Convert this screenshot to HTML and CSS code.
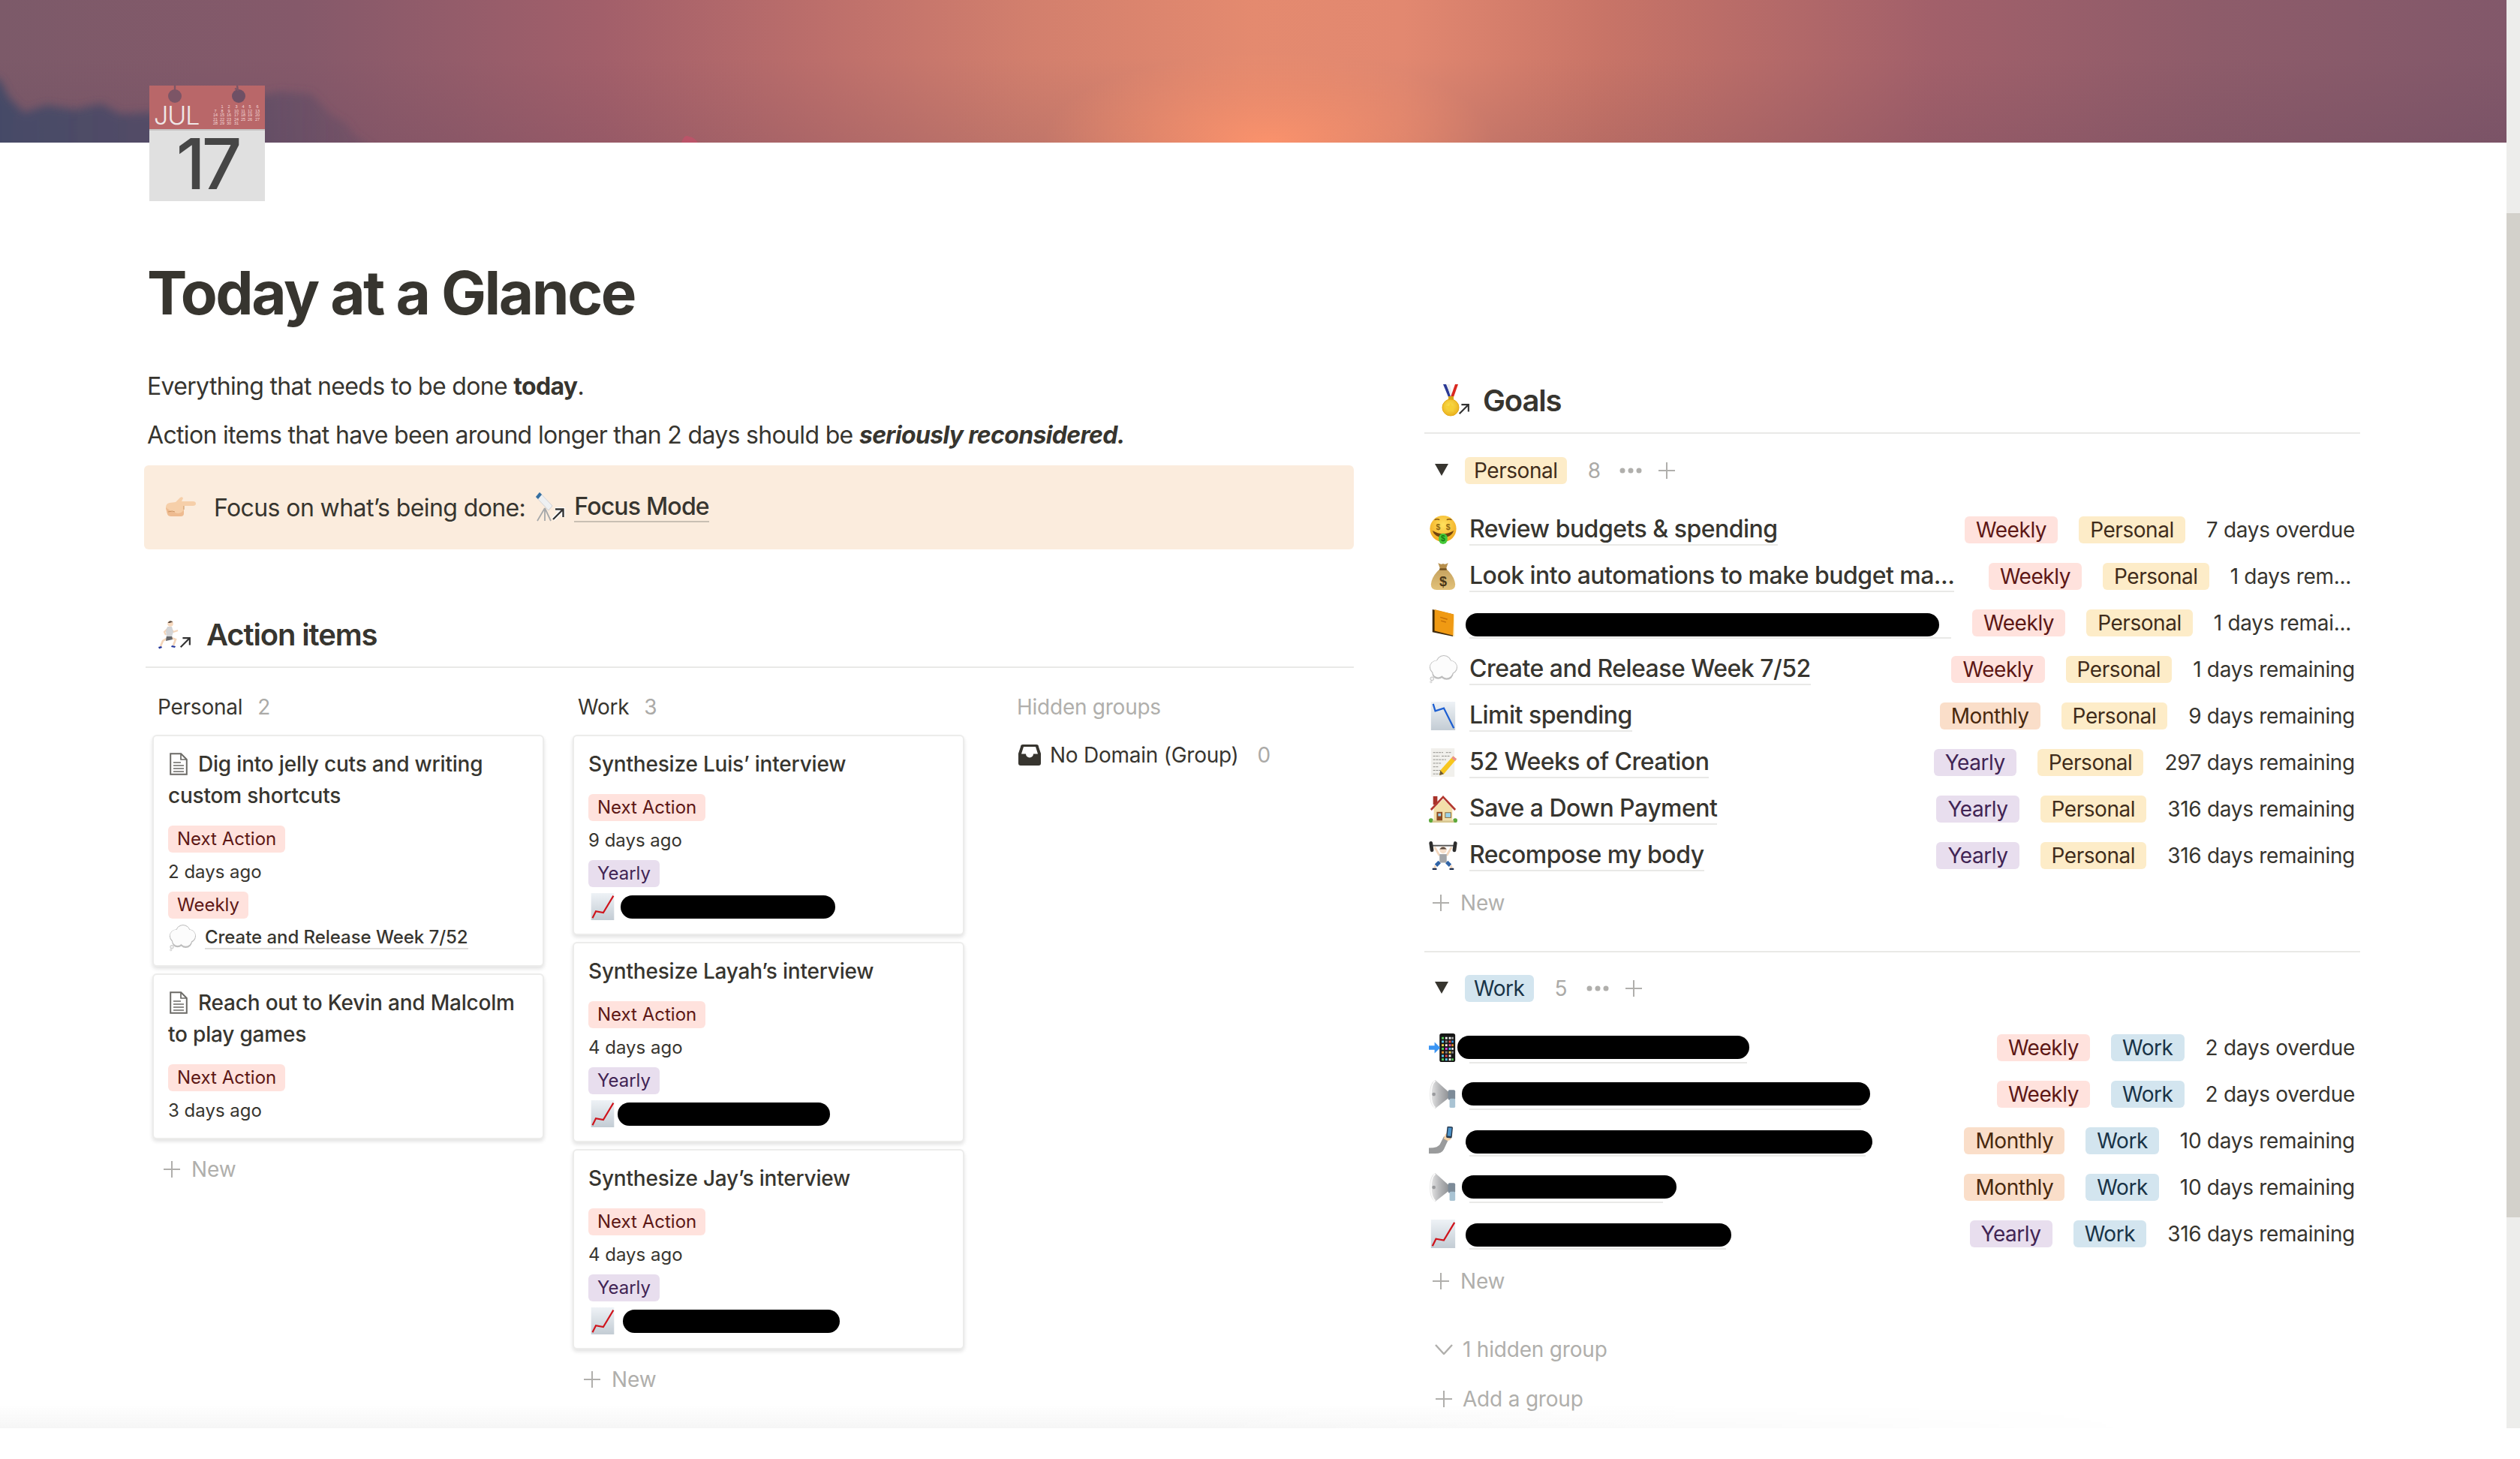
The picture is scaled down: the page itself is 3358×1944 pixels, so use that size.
FILE: index.html
```html
<!DOCTYPE html>
<html lang="en">
<head>
<meta charset="utf-8">
<title>Today at a Glance</title>
<link rel="stylesheet" href="styles.css">
</head>
<body>
<svg class="defs" width="0" height="0" aria-hidden="true">
  <defs>
    <linearGradient id="gChart" x1="0" y1="0" x2="0" y2="1"><stop offset="0" stop-color="#eef2f6"/><stop offset="1" stop-color="#c3ccd4"/></linearGradient>
    <radialGradient id="gFace" cx=".5" cy=".35" r=".7"><stop offset="0" stop-color="#ffe25e"/><stop offset="1" stop-color="#f0a41a"/></radialGradient>
    <radialGradient id="gGold" cx=".45" cy=".4" r=".7"><stop offset="0" stop-color="#fbe150"/><stop offset="1" stop-color="#e8ac16"/></radialGradient>
    <linearGradient id="gBag" x1="0" y1="0" x2="0" y2="1"><stop offset="0" stop-color="#c6a25f"/><stop offset="1" stop-color="#e2c27a"/></linearGradient>
    <linearGradient id="gHorn" x1="0" y1="0" x2="1" y2="0"><stop offset="0" stop-color="#ececec"/><stop offset=".5" stop-color="#b8b9bb"/><stop offset="1" stop-color="#909295"/></linearGradient>
    <linearGradient id="gCloud" x1="0" y1="0" x2="1" y2="0"><stop offset="0" stop-color="#454a67"/><stop offset=".45" stop-color="#4f4a66" stop-opacity=".9"/><stop offset="1" stop-color="#5f4b64" stop-opacity=".35"/></linearGradient>
    <filter id="fSoft" x="-5%" y="-10%" width="110%" height="120%"><feGaussianBlur stdDeviation="6"/></filter>

    <symbol id="i-arrow" viewBox="0 0 20 20"><path d="M3 17 16 4M6 3.5h10.5V14" fill="none" stroke="#fff" stroke-width="5"/><path d="M3 17 16 4M6 3.5h10.5V14" fill="none" stroke="#333" stroke-width="2.4"/></symbol>

    <symbol id="i-doc" viewBox="0 0 24 30"><path d="M1.2 1.2h14l7.6 7.8v19.8H1.2z" fill="#fff" stroke="#6b6a66" stroke-width="2"/><path d="M15 1.5V9h7.5M5 13h10M5 17h14M5 21h14M5 25h14" fill="none" stroke="#6b6a66" stroke-width="1.7"/></symbol>

    <symbol id="i-thought" viewBox="0 0 40 40"><g fill="#bdbdbd"><circle cx="11" cy="17" r="10"/><circle cx="21" cy="11" r="11"/><circle cx="30" cy="17" r="10"/><circle cx="25" cy="25" r="9.500"/><circle cx="13" cy="25" r="8.500"/></g><g fill="#fcfcfc"><circle cx="11" cy="16.500" r="9"/><circle cx="21" cy="11" r="10"/><circle cx="30" cy="16.500" r="9"/><circle cx="25" cy="23.500" r="8.500"/><circle cx="13" cy="23.500" r="7.500"/></g><circle cx="4.500" cy="33" r="2.500" fill="#f1f1f1" stroke="#bdbdbd"/><circle cx="3" cy="37.500" r="1.300" fill="#eee" stroke="#bdbdbd" stroke-width=".6"/></symbol>

    <symbol id="i-up" viewBox="0 0 40 40"><rect x="3" y="0" width="34" height="40" fill="url(#gChart)"/><path d="M5 37 10 27 21 29 36 4" fill="none" stroke="#cf141c" stroke-width="2.400"/></symbol>
    <symbol id="i-down" viewBox="0 0 40 40"><rect x="3" y="0" width="34" height="40" fill="url(#gChart)"/><path d="M6 3 9 13 21 9 35 37" fill="none" stroke="#1d5fd2" stroke-width="2.400"/></symbol>

    <symbol id="i-inbox" viewBox="0 0 30 28"><path d="M6 0h18a3 3 0 0 1 3 3l3 9v13a3 3 0 0 1-3 3H3a3 3 0 0 1-3-3V12l3-9a3 3 0 0 1 3-3z" fill="#37352f"/><path d="M7 3h16l3 9.500h-6a5 5 0 0 1-10 0H4z" fill="#fff"/></symbol>

    <symbol id="i-money" viewBox="0 0 40 40"><circle cx="20" cy="18.500" r="18.500" fill="url(#gFace)"/><path d="M8 6q4-2 7 0M25 6q4-2 7 0" fill="none" stroke="#8a5a10" stroke-width="1.400"/><text x="13" y="20" class="em-glyph" fill="#8c6412">$</text><text x="27" y="20" class="em-glyph" fill="#8c6412">$</text><path d="M5 21q15 9 30 0q-3 9-15 10q-12-1-15-10z" fill="#70420f"/><rect x="14" y="25" width="12" height="15" rx="6" fill="#47c93a"/><text x="20" y="36" class="em-glyph" fill="#157a12">$</text></symbol>

    <symbol id="i-bag" viewBox="0 0 40 40"><path d="M13 1q4 3 7 1q3 2 7-1l-3 9h-8z" fill="#b78f4c"/><path d="M15 10h10q11 10 12 21q0 8-8 8H11q-8 0-8-8q1-11 12-21z" fill="url(#gBag)"/><path d="M15 10h10" stroke="#6f4e1d" stroke-width="2.500"/><text x="20" y="34" class="em-bag" fill="#4a3718">$</text></symbol>

    <symbol id="i-book" viewBox="0 0 40 40"><path d="M5 1 34 8V39L5 33z" fill="#3f2a0c"/><path d="M8 1 35 8V38L8 31z" fill="#f09a13"/><path d="M35 8 36 9V39L34 39z" fill="#fff0c8"/><path d="M16 12 26 15M17 17 24 19" stroke="#c46f08" stroke-width="1.500"/></symbol>

    <symbol id="i-memo" viewBox="0 0 40 40"><rect x="3" y="0" width="33" height="40" fill="#f1f0ec"/><path d="M6 6h14M24 6h7M6 11h9M18 11h11M6 16h18M6 21h11M6 26h8M6 31h11M6 36h10" stroke="#8c8b86" stroke-width="1" stroke-dasharray="3 1"/><path d="M34 11 39 15 21 36 15 38 16 31z" fill="#f7c61e"/><path d="M34 11 39 15 37 18 32 14z" fill="#ea8f92"/><path d="M16 31 21 36 15 38z" fill="#6d5a38"/></symbol>

    <symbol id="i-house" viewBox="0 0 40 40"><rect x="6" y="2" width="6" height="12" fill="#a8322a"/><path d="M7 19 20 6l13 13v17H7z" fill="#f3dfa9"/><path d="M2 20 20 1l18 19-2 2L20 5 4 22z" fill="#b3392f"/><rect x="11" y="24" width="8" height="13" fill="#8d4a22"/><rect x="13" y="26" width="4" height="4" fill="#9bd2ea"/><rect x="23" y="25" width="8" height="7" fill="#9bd2ea" stroke="#8d6a35"/><circle cx="3" cy="36" r="3" fill="#5da83b"/><circle cx="37" cy="36" r="3" fill="#5da83b"/><rect x="5" y="36" width="30" height="3" fill="#d8c78f"/></symbol>

    <symbol id="i-lift" viewBox="0 0 40 40"><path d="M4 6 36 6" stroke="#555" stroke-width="2"/><rect x="1" y="0" width="5" height="15" rx="2.500" fill="#2d2d2d" transform="rotate(-8 3 7)"/><rect x="34" y="0" width="5" height="15" rx="2.500" fill="#2d2d2d" transform="rotate(8 36 7)"/><path d="M8 8 15 20M32 8 25 20" stroke="#f3d7bd" stroke-width="3"/><circle cx="20" cy="12" r="5" fill="#f6dfca"/><path d="M15 11q5-6 10 0" fill="#5b4a3e"/><rect x="15" y="18" width="10" height="12" fill="#a3a5a8"/><path d="M15 29 10 34M25 29 30 34" stroke="#2f63a6" stroke-width="5"/><path d="M9 34 8 39M31 34 32 39" stroke="#f3d7bd" stroke-width="3"/><path d="M5 39h6M29 39h6" stroke="#1c2c4c" stroke-width="2.500"/></symbol>

    <symbol id="i-phone" viewBox="0 0 40 40"><rect x="15" y="0" width="22" height="40" rx="3" fill="#161616"/><g fill="#5fd0f5"><rect x="18" y="5" width="3" height="3" fill="#57d45a"/><rect x="23" y="5" width="3" height="3" fill="#f2f2f2"/><rect x="28" y="5" width="3" height="3" fill="#f2f2f2"/><rect x="32" y="5" width="2.500" height="3" fill="#b2b2b2"/><rect x="18" y="10" width="3" height="3"/><rect x="23" y="10" width="3" height="3" fill="#888"/><rect x="28" y="10" width="3" height="3" fill="#e74f4f"/><rect x="32" y="10" width="2.500" height="3" fill="#2d9af0"/><rect x="18" y="15" width="3" height="3" fill="#f7d64a"/><rect x="23" y="15" width="3" height="3" fill="#f2f2f2"/><rect x="28" y="15" width="3" height="3" fill="#e8579f"/><rect x="32" y="15" width="2.500" height="3" fill="#f29a2e"/><rect x="18" y="20" width="3" height="3" fill="#57d45a"/><rect x="23" y="20" width="3" height="3" fill="#e53be0"/><rect x="28" y="20" width="3" height="3"/><rect x="32" y="20" width="2.500" height="3" fill="#f2f2f2"/><rect x="18" y="25" width="3" height="3" fill="#f29a2e"/><rect x="23" y="25" width="3" height="3" fill="#888"/><rect x="28" y="25" width="3" height="3" fill="#f7d64a"/><rect x="32" y="25" width="2.500" height="3" fill="#888"/><rect x="18" y="30" width="3" height="3"/><rect x="23" y="30" width="3" height="3" fill="#e74f4f"/><rect x="28" y="30" width="3" height="3" fill="#f2f2f2"/><rect x="18" y="35" width="3" height="3" fill="#57d45a"/><rect x="23" y="35" width="3" height="3"/><rect x="28" y="35" width="3" height="3" fill="#f2f2f2"/><rect x="32" y="35" width="2.500" height="3" fill="#57d45a"/></g><path d="M0 17h8v-5l8 8-8 8v-5H0z" fill="#3a95f4"/></symbol>

    <symbol id="i-horn" viewBox="0 0 40 40"><path d="M28 17 9 0Q1 4 1 20t8 20L28 25z" fill="url(#gHorn)"/><path d="M9 1q-6 5-6 19t6 19" fill="none" stroke="#fafafa" stroke-width="2"/><circle cx="7" cy="20" r="2.500" fill="#9a9b9e"/><rect x="27" y="14" width="10" height="14" rx="2" fill="#7d8b98"/><rect x="29" y="26" width="8" height="13" rx="2" fill="#a9c3d3"/></symbol>

    <symbol id="i-selfie" viewBox="0 0 40 40"><path d="M0 30q14 0 16-6l5-10 7 3-7 15q-3 6-12 6H0z" fill="#9a9b9c"/><path d="M21 17l2-6 7-6 3 7-3 7-4 1z" fill="#f8d3a8"/><rect x="25" y="0" width="8" height="16" rx="1.500" fill="#27384c" transform="rotate(6 29 8)"/><rect x="26.500" y="1.500" width="5" height="12" fill="#4c93c9" transform="rotate(6 29 8)"/></symbol>

    <symbol id="i-hand" viewBox="0 0 42 28"><path d="M1 14q0-5 5-6l8-1 6-6q3-2 4 1l-2 4h15q4 0 4 3t-4 3H25v9q0 4-4 4H8q-4 0-5-3z" fill="#f6cfa9"/><path d="M1 14q0 2 1 5l1 4q1 3 5 3h13q4 0 4-4v-5q-4 7-12 4T1 14z" fill="#eebb90"/><path d="M25 12v5M4 20q6-2 9 0" stroke="#c9925f" stroke-width="1" fill="none"/></symbol>

    <symbol id="i-scope" viewBox="0 0 45 41"><path d="M5 8 10 2 27 20 22 26z" fill="#eef0f2" stroke="#c9ccd0" stroke-width=".8"/><path d="M5 8 10 2 13 5 8 11z" fill="#356f9f"/><path d="M7 40 17 23M17 24 17 40M17 23 25 40" stroke="#a6a8aa" stroke-width="1.800"/><g transform="translate(25 21)"><use href="#i-arrow" width="20" height="20"/></g></symbol>

    <symbol id="i-run" viewBox="0 0 45 38"><path d="M14 22 6 27 3 34M15 22 23 25 20 33" fill="none" stroke="#f3d5ba" stroke-width="2.600"/><path d="M11 20h7l1 5-9 2z" fill="#66676a"/><path d="M15 8 20 15 26 13M14 9 8 15 10 19" fill="none" stroke="#f3d5ba" stroke-width="2.200"/><path d="M12 8h6l2 7-2 6h-7l-1-7z" fill="#d3d4d6"/><circle cx="16" cy="4" r="3.800" fill="#f6d9bf"/><path d="M12.500 3q3-5 7-1-3 0-4 1z" fill="#5b4a3e"/><path d="M0 35l4-1 1 2-4 1.500zM18 33l5 1-1 2-5-1z" fill="#24379c"/><g transform="translate(27 20)"><use href="#i-arrow" width="18" height="18"/></g></symbol>

    <symbol id="i-medal" viewBox="0 0 40 43"><path d="M2 0h4l7 17h-4z" fill="#2b3a95"/><path d="M7 0h4l3 13-2 4z" fill="#eee"/><path d="M22 0h-4L12 17h4z" fill="#d9281f"/><rect x="9" y="16" width="7" height="5" fill="#d5a51a"/><circle cx="12" cy="31" r="11" fill="url(#gGold)" stroke="#e5a913"/><path d="M12 24.500l2 4.200 4.600.6-3.300 3.200.8 4.600-4.100-2.200-4.100 2.200.8-4.600-3.300-3.200 4.600-.6z" fill="#f6cf34"/><g transform="translate(21 24)"><use href="#i-arrow" width="18" height="18"/></g></symbol>

    <symbol id="i-plus" viewBox="0 0 24 24"><path d="M12 1v22M1 12h22" fill="none" stroke="currentColor" stroke-width="2"/></symbol>
    <symbol id="i-tri" viewBox="0 0 18 16"><path d="M0 0h18L9 16z" fill="#37352f"/></symbol>
    <symbol id="i-dots" viewBox="0 0 30 8"><circle cx="4" cy="4" r="3.500" fill="currentColor"/><circle cx="15" cy="4" r="3.500" fill="currentColor"/><circle cx="26" cy="4" r="3.500" fill="currentColor"/></symbol>
    <symbol id="i-chev" viewBox="0 0 24 14"><path d="M1 1 12 13 23 1" fill="none" stroke="currentColor" stroke-width="2.400"/></symbol>
  </defs>
</svg>

<div class="window">
  <div class="page">
    <div class="cover">
      <svg class="cover-art" viewBox="0 0 3340 190" aria-hidden="true">
        <path d="M-20 100 0 106 12 130 32 150 62 140 100 146 135 138 160 152 230 148 300 145 345 128 372 122 415 125 440 152 462 165 470 178 500 200 -20 210z" fill="url(#gCloud)" filter="url(#fSoft)"/>
        <path d="M908 190q4-12 10-8 6 0 12 8z" fill="#c4506a" opacity=".75"/>
      </svg>
    </div>

    <div class="page-inner">
      <div class="page-icon">
        <svg class="cal-art" viewBox="0 0 154 154" aria-hidden="true">
          <rect width="154" height="60" fill="#b96769"/>
          <rect y="58" width="154" height="96" fill="#e0e0e0"/>
          <rect y="58" width="154" height="2" fill="#c7c3c3"/>
          <circle cx="34" cy="14" r="9" fill="#7c5566"/>
          <circle cx="119" cy="14" r="9" fill="#6f5065"/>
          <path d="M34 0v6M117 0l1 7M114 4l5 2" stroke="#7c5566" stroke-width="2.400"/>
          <g class="cal-days">
            <text x="97" y="30">1</text><text x="106" y="30">2</text><text x="116" y="30">3</text><text x="125" y="30">4</text><text x="134" y="30">5</text><text x="144" y="30">6</text>
            <text x="88" y="35.500">7</text><text x="97" y="35.500">8</text><text x="106" y="35.500">9</text><text x="116" y="35.500">10</text><text x="125" y="35.500">11</text><text x="134" y="35.500">12</text><text x="144" y="35.500">13</text>
            <text x="88" y="41">14</text><text x="97" y="41">15</text><text x="106" y="41">16</text><text x="116" y="41">17</text><text x="125" y="41">18</text><text x="134" y="41">19</text><text x="144" y="41">20</text>
            <text x="88" y="46.500">21</text><text x="97" y="46.500">22</text><text x="106" y="46.500">23</text><text x="116" y="46.500">24</text><text x="125" y="46.500">25</text><text x="134" y="46.500">26</text><text x="144" y="46.500">27</text>
            <text x="88" y="52">28</text><text x="97" y="52">29</text><text x="106" y="52">30</text><text x="116" y="52">31</text>
          </g>
        </svg>
        <span class="cal-month">JUL</span>
        <span class="cal-date">17</span>
      </div>

      <h1 class="title">Today at a Glance</h1>

      <div class="columns">
        <section class="col-left">
          <p class="para">Everything that needs to be done <b>today</b>.</p>
          <p class="para para-second">Action items that have been around longer than 2 days should be <b><i>seriously reconsidered.</i></b></p>

          <div class="callout">
            <svg class="ic-hand"><use href="#i-hand"/></svg>
            <span class="callout-text">Focus on what’s being done:</span>
            <svg class="ic-scope"><use href="#i-scope"/></svg>
            <span class="link">Focus Mode</span>
          </div>

          <h3 class="heading heading-action">
            <svg class="ic-run"><use href="#i-run"/></svg>
            <span>Action items</span>
          </h3>

          <div class="board">
            <div class="board-col">
              <div class="board-head"><span>Personal</span><span class="count">2</span></div>
              <article class="card">
                <div class="card-title"><svg class="ic-doc"><use href="#i-doc"/></svg>Dig into jelly cuts and writing custom shortcuts</div>
                <div class="card-props">
                  <span class="tag tag-sm red">Next Action</span>
                  <span class="card-date">2 days ago</span>
                  <span class="tag tag-sm red">Weekly</span>
                  <span class="relation"><svg class="ic-rel"><use href="#i-thought"/></svg><span class="rel-link">Create and Release Week 7/52</span></span>
                </div>
              </article>
              <article class="card">
                <div class="card-title"><svg class="ic-doc"><use href="#i-doc"/></svg>Reach out to Kevin and Malcolm to play games</div>
                <div class="card-props">
                  <span class="tag tag-sm red">Next Action</span>
                  <span class="card-date">3 days ago</span>
                </div>
              </article>
              <div class="board-new"><svg class="ic-plus"><use href="#i-plus"/></svg>New</div>
            </div>

            <div class="board-col">
              <div class="board-head"><span>Work</span><span class="count">3</span></div>
              <article class="card">
                <div class="card-title">Synthesize Luis’ interview</div>
                <div class="card-props">
                  <span class="tag tag-sm red">Next Action</span>
                  <span class="card-date">9 days ago</span>
                  <span class="tag tag-sm purple">Yearly</span>
                  <span class="relation"><svg class="ic-rel"><use href="#i-up"/></svg><span class="pill pill-a"></span></span>
                </div>
              </article>
              <article class="card">
                <div class="card-title">Synthesize Layah’s interview</div>
                <div class="card-props">
                  <span class="tag tag-sm red">Next Action</span>
                  <span class="card-date">4 days ago</span>
                  <span class="tag tag-sm purple">Yearly</span>
                  <span class="relation"><svg class="ic-rel"><use href="#i-up"/></svg><span class="pill pill-b"></span></span>
                </div>
              </article>
              <article class="card">
                <div class="card-title">Synthesize Jay’s interview</div>
                <div class="card-props">
                  <span class="tag tag-sm red">Next Action</span>
                  <span class="card-date">4 days ago</span>
                  <span class="tag tag-sm purple">Yearly</span>
                  <span class="relation"><svg class="ic-rel"><use href="#i-up"/></svg><span class="pill pill-c"></span></span>
                </div>
              </article>
              <div class="board-new"><svg class="ic-plus"><use href="#i-plus"/></svg>New</div>
            </div>

            <div class="board-hidden">
              <div class="board-head muted">Hidden groups</div>
              <div class="hidden-row"><svg class="ic-inbox"><use href="#i-inbox"/></svg><span>No Domain (Group)</span><span class="count">0</span></div>
            </div>
          </div>
        </section>

        <section class="col-right">
          <h3 class="heading heading-goals">
            <svg class="ic-medal"><use href="#i-medal"/></svg>
            <span>Goals</span>
          </h3>

          <div class="group-head">
            <svg class="ic-tri"><use href="#i-tri"/></svg>
            <span class="tag tag-head yellow">Personal</span>
            <span class="count">8</span>
            <svg class="ic-dots"><use href="#i-dots"/></svg>
            <svg class="ic-plus-head"><use href="#i-plus"/></svg>
          </div>

          <div class="goal"><svg class="ic-goal"><use href="#i-money"/></svg><span class="goal-title">Review budgets &amp; spending</span><span class="props"><span class="tag red">Weekly</span><span class="tag yellow">Personal</span><span class="goal-date">7 days overdue</span></span></div>
          <div class="goal"><svg class="ic-goal"><use href="#i-bag"/></svg><span class="goal-title">Look into automations to make budget ma...</span><span class="props"><span class="tag red">Weekly</span><span class="tag yellow">Personal</span><span class="goal-date trunc">1 days rem...</span></span></div>
          <div class="goal"><svg class="ic-goal"><use href="#i-book"/></svg><span class="goal-title blank b-p3"><span class="pill pill-p3"></span></span><span class="props"><span class="tag red">Weekly</span><span class="tag yellow">Personal</span><span class="goal-date trunc">1 days remai...</span></span></div>
          <div class="goal"><svg class="ic-goal"><use href="#i-thought"/></svg><span class="goal-title">Create and Release Week 7/52</span><span class="props"><span class="tag red">Weekly</span><span class="tag yellow">Personal</span><span class="goal-date">1 days remaining</span></span></div>
          <div class="goal"><svg class="ic-goal"><use href="#i-down"/></svg><span class="goal-title">Limit spending</span><span class="props"><span class="tag orange">Monthly</span><span class="tag yellow">Personal</span><span class="goal-date">9 days remaining</span></span></div>
          <div class="goal"><svg class="ic-goal"><use href="#i-memo"/></svg><span class="goal-title">52 Weeks of Creation</span><span class="props"><span class="tag purple">Yearly</span><span class="tag yellow">Personal</span><span class="goal-date">297 days remaining</span></span></div>
          <div class="goal"><svg class="ic-goal"><use href="#i-house"/></svg><span class="goal-title">Save a Down Payment</span><span class="props"><span class="tag purple">Yearly</span><span class="tag yellow">Personal</span><span class="goal-date">316 days remaining</span></span></div>
          <div class="goal"><svg class="ic-goal"><use href="#i-lift"/></svg><span class="goal-title">Recompose my body</span><span class="props"><span class="tag purple">Yearly</span><span class="tag yellow">Personal</span><span class="goal-date">316 days remaining</span></span></div>
          <div class="list-new"><svg class="ic-plus"><use href="#i-plus"/></svg>New</div>

          <div class="group-sep"></div>

          <div class="group-head group-head-work">
            <svg class="ic-tri"><use href="#i-tri"/></svg>
            <span class="tag tag-head blue">Work</span>
            <span class="count">5</span>
            <svg class="ic-dots"><use href="#i-dots"/></svg>
            <svg class="ic-plus-head"><use href="#i-plus"/></svg>
          </div>

          <div class="goal"><svg class="ic-goal"><use href="#i-phone"/></svg><span class="goal-title blank b-w1"><span class="pill pill-w1"></span></span><span class="props"><span class="tag red">Weekly</span><span class="tag blue">Work</span><span class="goal-date">2 days overdue</span></span></div>
          <div class="goal"><svg class="ic-goal"><use href="#i-horn"/></svg><span class="goal-title blank b-w2"><span class="pill pill-w2"></span></span><span class="props"><span class="tag red">Weekly</span><span class="tag blue">Work</span><span class="goal-date">2 days overdue</span></span></div>
          <div class="goal"><svg class="ic-goal"><use href="#i-selfie"/></svg><span class="goal-title blank b-w3"><span class="pill pill-w3"></span></span><span class="props"><span class="tag orange">Monthly</span><span class="tag blue">Work</span><span class="goal-date">10 days remaining</span></span></div>
          <div class="goal"><svg class="ic-goal"><use href="#i-horn"/></svg><span class="goal-title blank b-w4"><span class="pill pill-w4"></span></span><span class="props"><span class="tag orange">Monthly</span><span class="tag blue">Work</span><span class="goal-date">10 days remaining</span></span></div>
          <div class="goal"><svg class="ic-goal"><use href="#i-up"/></svg><span class="goal-title blank b-w5"><span class="pill pill-w5"></span></span><span class="props"><span class="tag purple">Yearly</span><span class="tag blue">Work</span><span class="goal-date">316 days remaining</span></span></div>
          <div class="list-new"><svg class="ic-plus"><use href="#i-plus"/></svg>New</div>

          <div class="list-foot list-foot-hidden"><svg class="ic-chev"><use href="#i-chev"/></svg>1 hidden group</div>
          <div class="list-foot list-foot-add"><svg class="ic-plus"><use href="#i-plus"/></svg>Add a group</div>
        </section>
      </div>
    </div>
    <div class="bottom-fade"></div>
  </div>
  <div class="scrollbar"><div class="scroll-thumb"></div></div>
</div>
</body>
</html>
```

FILE: styles.css
```css
* { box-sizing: border-box; }

html, body {
  margin: 0;
  height: 1944px;
  overflow: hidden;
  background: #fff;
}

body {
  font-family: Inter, "Liberation Sans", sans-serif;
  color: #37352f;
  font-size: 32px;
}

.defs { position: absolute; }

.window { display: flex; height: 1903px; }

.page {
  position: relative;
  flex: 1;
  min-width: 0;
  overflow: hidden;
  background: #fff;
}

.scrollbar { width: 18px; background: #ededeb; padding-top: 284px; }
.scroll-thumb { height: 1338px; background: #d3d1cb; }

.cover {
  height: 190px;
  overflow: hidden;
  background:
    radial-gradient(ellipse 300px 120px at 50.6% 100%, rgba(255, 148, 108, .9), rgba(255, 148, 108, 0)),
    linear-gradient(to bottom, rgba(90, 60, 90, 0) 40%, rgba(70, 50, 80, .12) 100%),
    linear-gradient(to right, #7c5a69 0, #85596a 12%, #a25f6a 24%, #bd6f6b 33%, #d27f6d 41%, #e48a6f 50%, #e28870 56%, #c87467 64%, #a2606a 77%, #8e5c6a 88%, #82586a 100%);
}

.cover-art { display: block; width: 3340px; height: 190px; }

.page-inner { padding: 0 0 0 196px; }

.page-icon {
  position: relative;
  width: 154px;
  height: 154px;
  margin: -76px 0 0 3px;
}

.cal-art { display: block; width: 154px; height: 154px; }

.cal-month {
  position: absolute;
  left: 6px;
  top: 26px;
  font-size: 34px;
  font-weight: 300;
  line-height: 28px;
  letter-spacing: -1px;
  color: #efe7e7;
}

.cal-date {
  position: absolute;
  left: 0;
  right: 0;
  top: 70px;
  font-size: 94px;
  font-weight: 500;
  line-height: 68px;
  text-align: center;
  letter-spacing: -5px;
  color: #464646;
}

.cal-days text { font: 400 5.500px "Liberation Sans", sans-serif; fill: #f3dada; text-anchor: middle; }
.em-glyph { font: 700 11px "Liberation Sans", sans-serif; text-anchor: middle; }
.em-bag { font: 700 19px "Liberation Sans", sans-serif; text-anchor: middle; }

.title {
  margin: 74px 0 0;
  font-size: 80px;
  line-height: 96px;
  font-weight: 700;
  letter-spacing: -2.450px;
  color: #37352f;
}

.columns { display: flex; margin-top: 53px; }

.col-left { width: 1608px; flex: none; }
.col-right { width: 1247px; flex: none; margin-left: 94px; }

.para {
  margin: 0;
  font-size: 32px;
  line-height: 48px;
  letter-spacing: -.67px;
}
.para-second { margin-top: 17px; }

.callout {
  display: flex;
  align-items: center;
  height: 112px;
  margin: 16px 0 0 -4px;
  padding-left: 28px;
  background: #fbecdd;
  border-radius: 6px;
  letter-spacing: -.6px;
}

.ic-hand { width: 42px; height: 28px; flex: none; }
.callout-text { margin-left: 23px; }
.ic-scope { width: 45px; height: 41px; flex: none; margin: -4px 11px 0 9px; }
.link { border-bottom: 2px solid #c9bfb3; line-height: 38px; font-weight: 500; letter-spacing: -.8px; }

.heading {
  display: flex;
  align-items: center;
  margin: 0;
  font-size: 40px;
  line-height: 52px;
  font-weight: 600;
  letter-spacing: -1.150px;
  border-bottom: 2px solid #e9e9e7;
}

.heading-action { margin: 88px 0 0 -2px; height: 70px; padding: 0 0 16px 17px; }
.ic-run { width: 45px; height: 38px; flex: none; margin-right: 19px; }

.heading-goals { height: 87px; padding: 0 0 0 23px; margin: 0; }
.ic-medal { width: 40px; height: 43px; flex: none; margin-right: 15px; }

.board { display: flex; margin: 34px 0 0 7px; }
.board-col { width: 522px; flex: none; margin-right: 38px; }
.board-hidden { margin-left: 32px; }

.board-head {
  display: flex;
  height: 36px;
  align-items: center;
  padding-left: 7px;
  font-size: 28px;
  letter-spacing: -.25px;
  gap: 20px;
  margin-bottom: 19px;
}
.muted { color: #b0afac; padding-left: 0; }

.count { color: #abaaa7; }

.card {
  background: #fff;
  border: 2px solid #ececeb;
  border-radius: 6px;
  box-shadow: 0 3px 5px rgba(15, 15, 15, .12);
  padding: 16px 19px 18px;
  margin-bottom: 9px;
}

.card-title {
  font-size: 28px;
  line-height: 42px;
  font-weight: 500;
  letter-spacing: -.2px;
}

.ic-doc { width: 24px; height: 30px; margin: 0 14px -5px 2px; }

.card-props {
  display: flex;
  flex-direction: column;
  align-items: flex-start;
  gap: 8px;
  margin-top: 19px;
}

.card-date { font-size: 24px; line-height: 36px; letter-spacing: 0; }

.tag {
  display: inline-block;
  height: 36px;
  padding: 0 15px;
  border-radius: 6px;
  font-size: 28px;
  line-height: 36px;
  white-space: nowrap;
  letter-spacing: -.45px;
}
.tag-sm { padding: 0 12px; font-size: 24px; letter-spacing: 0; }
.tag-head { padding: 0 12px; }

.red { background: #ffe2dd; color: #5d1715; }
.yellow { background: #fdecc8; color: #402c1b; }
.orange { background: #fadec9; color: #49290e; }
.purple { background: #e8deee; color: #412454; }
.blue { background: #d3e5ef; color: #183347; }

.relation { display: flex; align-items: center; height: 36px; font-size: 24px; letter-spacing: -.05px; }
.ic-rel { width: 36px; height: 36px; flex: none; margin-left: 1px; }
.rel-link { margin-left: 12px; border-bottom: 2px solid #dedddb; line-height: 28px; font-weight: 500; }

.pill { display: block; height: 31px; background: #000; border-radius: 16px; }
.relation .pill { margin-left: 6px; }
.relation .pill-b { margin-left: 2px; }
.relation .pill-c { margin-left: 9px; }
.pill-a { width: 286px; }
.pill-b { width: 283px; }
.pill-c { width: 289px; }

.board-new {
  display: flex;
  align-items: center;
  height: 44px;
  margin: 18px 0 0 14px;
  color: #b0afac;
  font-size: 28px;
  letter-spacing: -.1px;
}
.board-new .ic-plus { margin-right: 14px; }
.ic-plus { width: 24px; height: 24px; flex: none; }

.hidden-row {
  display: flex;
  align-items: center;
  height: 34px;
  margin-top: 29px;
  font-size: 28px;
  letter-spacing: -.25px;
}
.ic-inbox { width: 30px; height: 28px; flex: none; margin: 0 12px 0 2px; }
.hidden-row .count { margin-left: 25px; }

.group-head {
  display: flex;
  align-items: center;
  height: 36px;
  margin-top: 31px;
  padding-left: 14px;
  font-size: 28px;
}
.group-head-work { margin-top: 30px; margin-bottom: 30px; }
.ic-tri { width: 18px; height: 16px; flex: none; margin: -2px 22px 0 0; }
.group-head .count { margin-left: 28px; }
.ic-dots { width: 30px; height: 8px; flex: none; margin-left: 25px; color: #b0afac; }
.ic-plus-head { width: 24px; height: 24px; flex: none; margin-left: 21px; color: #b0afac; }

.group-head + .goal { margin-top: 30px; }
.group-head-work + .goal { margin-top: 0; }

.goal {
  display: flex;
  align-items: center;
  height: 62px;
  padding: 0 7px 0 6px;
}

.ic-goal { width: 38px; height: 38px; flex: none; margin-right: 16px; }

.goal-title {
  position: relative;
  display: block;
  flex: none;
  font-size: 32px;
  line-height: 40px;
  font-weight: 500;
  letter-spacing: -.52px;
  border-bottom: 2px solid #e9e9e7;
  white-space: nowrap;
}
.blank { height: 42px; }

.b-p3 { width: 642px; }
.b-w1 { width: 370px; }
.b-w2 { width: 522px; }
.b-w3 { width: 528px; }
.b-w4 { width: 258px; }
.b-w5 { width: 342px; }

.goal-title .pill { position: absolute; top: 5px; }
.goal-title .pill-p3 { left: -5px; width: 631px; top: 8px; }
.pill-w1 { left: -16px; width: 389px; }
.pill-w2 { left: -10px; width: 544px; }
.goal-title .pill-w3 { left: -5px; width: 542px; top: 7px; }
.pill-w4 { left: -10px; width: 286px; }
.goal-title .pill-w5 { left: -5px; width: 354px; top: 7px; }

.props {
  display: flex;
  align-items: center;
  gap: 28px;
  margin-left: auto;
  padding-left: 28px;
}
.goal-date { font-size: 28px; white-space: nowrap; letter-spacing: -.3px; }
.trunc { padding-right: 5px; }

.list-new, .list-foot {
  display: flex;
  align-items: center;
  color: #b0afac;
  font-size: 28px;
  letter-spacing: -.2px;
}
.list-new { height: 44px; margin-top: 10px; padding-left: 10px; }
.list-new .ic-plus { margin-right: 14px; }

.group-sep { height: 2px; margin-top: 42px; background: #e9e9e7; }

.list-foot { height: 44px; padding-left: 14px; }
.list-foot-hidden { margin-top: 47px; }
.list-foot-hidden .ic-chev { width: 24px; height: 14px; flex: none; margin-right: 13px; }
.list-foot-add { margin-top: 22px; }
.list-foot-add .ic-plus { margin-right: 13px; }

.bottom-fade {
  position: absolute;
  left: 0;
  bottom: 0;
  width: 2880px;
  height: 32px;
  background: linear-gradient(to bottom, rgba(15, 15, 15, 0), rgba(15, 15, 15, .04));
  -webkit-mask-image: linear-gradient(to right, #000 55%, transparent 100%);
  mask-image: linear-gradient(to right, #000 55%, transparent 100%);
  pointer-events: none;
}
```
